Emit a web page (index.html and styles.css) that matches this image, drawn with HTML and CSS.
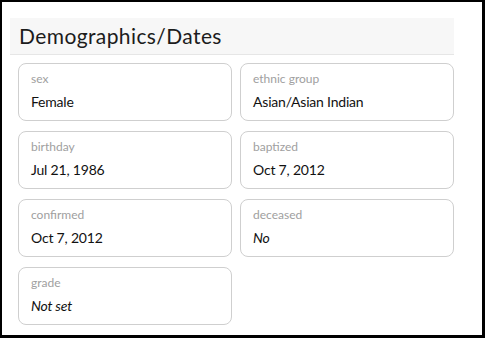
FILE: index.html
```html
<!DOCTYPE html>
<html lang="en">
<head>
	<meta charset="UTF-8">
	<title>Demographics/Dates</title>
	<link rel="stylesheet" href="styles.css">
</head>
<body>
	<div class="frame">
		<div class="panel">
			<div class="panel-head">Demographics/Dates</div>
			<div class="fields">
				<div class="field">
					<div class="field-label">sex</div>
					<div class="field-value">Female</div>
				</div>
				<div class="field">
					<div class="field-label">ethnic group</div>
					<div class="field-value">Asian/Asian Indian</div>
				</div>
				<div class="field">
					<div class="field-label">birthday</div>
					<div class="field-value">Jul 21, 1986</div>
				</div>
				<div class="field">
					<div class="field-label">baptized</div>
					<div class="field-value">Oct 7, 2012</div>
				</div>
				<div class="field">
					<div class="field-label">confirmed</div>
					<div class="field-value">Oct 7, 2012</div>
				</div>
				<div class="field">
					<div class="field-label">deceased</div>
					<div class="field-value empty">No</div>
				</div>
				<div class="field">
					<div class="field-label">grade</div>
					<div class="field-value empty">Not set</div>
				</div>
			</div>
		</div>
	</div>
</body>
</html>
```

FILE: styles.css
```css
		html, body {
			margin: 0;
			height: 100%;
		}

		body {
			background-color: #000;
			font-family: Lato, "Open Sans", sans-serif;
			color: #1a1a1a;
			overflow: hidden;
		}

		.frame {
			background-color: #fff;
			margin: 2px 3px 3px 2px;
			height: 333px;
			padding-top: 16px;
			box-sizing: border-box;
		}

		.panel {
			margin-left: 8px;
			width: 444px;
		}

		.panel-head {
			background-color: #f7f7f7;
			border-bottom: 1px solid #e6e6e6;
			height: 36px;
			line-height: 36px;
			font-size: 21px;
			letter-spacing: 0.4px;
			padding-left: 9px;
			color: #1c1c1c;
		}

		.fields {
			display: grid;
			grid-template-columns: 214px 214px;
			column-gap: 8px;
			row-gap: 10px;
			margin: 8px 0 0 8px;
		}

		.field {
			border: 1px solid #cfcfcf;
			border-radius: 8px;
			height: 58px;
			box-sizing: border-box;
			padding: 7px 12px 0;
		}

		.field-label {
			font-size: 12px;
			line-height: 16px;
			color: #a0a0a0;
			margin-bottom: 5px;
		}

		.field-value {
			font-size: 14px;
			line-height: 20px;
			letter-spacing: -0.2px;
			color: #111;
		}

		.field-value.empty {
			font-style: italic;
		}
```
